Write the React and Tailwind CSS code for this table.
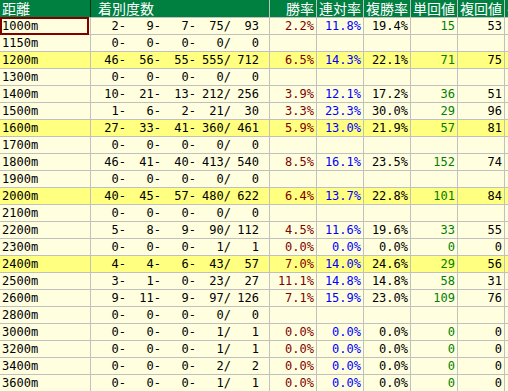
const ROWS = [
  ["1000m", [2, 9, 7, 75, 93], ["2.2%", "11.8%", "19.4%", "15", "53"]],
  ["1150m", [0, 0, 0, 0, 0], null],
  ["1200m", [46, 56, 55, 555, 712], ["6.5%", "14.3%", "22.1%", "71", "75"], true],
  ["1300m", [0, 0, 0, 0, 0], null],
  ["1400m", [10, 21, 13, 212, 256], ["3.9%", "12.1%", "17.2%", "36", "51"]],
  ["1500m", [1, 6, 2, 21, 30], ["3.3%", "23.3%", "30.0%", "29", "96"]],
  ["1600m", [27, 33, 41, 360, 461], ["5.9%", "13.0%", "21.9%", "57", "81"], true],
  ["1700m", [0, 0, 0, 0, 0], null],
  ["1800m", [46, 41, 40, 413, 540], ["8.5%", "16.1%", "23.5%", "152", "74"]],
  ["1900m", [0, 0, 0, 0, 0], null],
  ["2000m", [40, 45, 57, 480, 622], ["6.4%", "13.7%", "22.8%", "101", "84"], true],
  ["2100m", [0, 0, 0, 0, 0], null],
  ["2200m", [5, 8, 9, 90, 112], ["4.5%", "11.6%", "19.6%", "33", "55"]],
  ["2300m", [0, 0, 0, 1, 1], ["0.0%", "0.0%", "0.0%", "0", "0"]],
  ["2400m", [4, 4, 6, 43, 57], ["7.0%", "14.0%", "24.6%", "29", "56"], true],
  ["2500m", [3, 1, 0, 23, 27], ["11.1%", "14.8%", "14.8%", "58", "31"]],
  ["2600m", [9, 11, 9, 97, 126], ["7.1%", "15.9%", "23.0%", "109", "76"]],
  ["2800m", [0, 0, 0, 0, 0], null],
  ["3000m", [0, 0, 0, 1, 1], ["0.0%", "0.0%", "0.0%", "0", "0"]],
  ["3200m", [0, 0, 0, 1, 1], ["0.0%", "0.0%", "0.0%", "0", "0"]],
  ["3400m", [0, 0, 0, 2, 2], ["0.0%", "0.0%", "0.0%", "0", "0"]],
  ["3600m", [0, 0, 0, 1, 1], ["0.0%", "0.0%", "0.0%", "0", "0"]],
];

const HEAD = ["勝率", "連対率", "複勝率", "単回値", "複回値", "平均人"];
const RATE_COLORS = ["text-[#800000]", "text-[#0000ff]", "text-black", "text-[#008000]", "text-black"];

function Row({ dist, counts, rates, hl, first }) {
  const [a, b, c, d, e] = counts;
  return (
    <div className={`flex h-[17px] shrink-0 border-t border-[#c0c0c0] ${hl ? "bg-[#ffff80]" : "bg-[#ffffe0]"}`}>
      <div className="relative w-[90px] shrink-0 pl-[2px]">
        {dist}
        {first && <div className="absolute left-0 top-[-1px] w-[89px] h-[18px] border-2 border-[#800000]" />}
      </div>
      <div className="flex w-[179px] shrink-0 justify-end border-l border-[#c0c0c0] pr-[10px]">
        <span className="w-[35px] text-right">{a}-</span>
        <span className="w-[35px] text-right">{b}-</span>
        <span className="w-[35px] text-right">{c}-</span>
        <span className="w-[35px] text-right">{d}/</span>
        <span className="w-[28px] text-right">{e}</span>
      </div>
      {RATE_COLORS.map((col, i) => (
        <div key={i} className={`w-[47px] shrink-0 border-l border-[#c0c0c0] pr-[2px] text-right ${col}`}>
          {rates ? rates[i] : ""}
        </div>
      ))}
      <div className="w-[47px] shrink-0 border-l border-[#c0c0c0]" />
    </div>
  );
}

export default function App() {
  return (
    <div className="w-[508px] h-[391px] overflow-hidden bg-white">
      <div className="flex flex-col w-[600px] text-[12px] leading-[16px] text-black" style={{ fontFamily: '"DejaVu Sans Mono", monospace' }}>
        {/* header */}
        <div className="flex h-[17px] shrink-0 bg-[#008040] text-white text-[14px] leading-[17px]" style={{ fontFamily: '"Noto Sans CJK JP", sans-serif' }}>
          <div className="w-[90px] shrink-0 pl-[2px]">距離</div>
          <div className="w-[179px] shrink-0 border-l border-[#003018] pl-[7px]">着別度数</div>
          {HEAD.map((h) => (
            <div key={h} className="w-[47px] shrink-0 border-l border-[#c0c0c0] pr-[2px] text-right">
              {h}
            </div>
          ))}
        </div>

        {ROWS.map(([dist, counts, rates, hl], i) => (
          <Row key={dist} dist={dist} counts={counts} rates={rates} hl={hl} first={i === 0} />
        ))}
      </div>
    </div>
  );
}
